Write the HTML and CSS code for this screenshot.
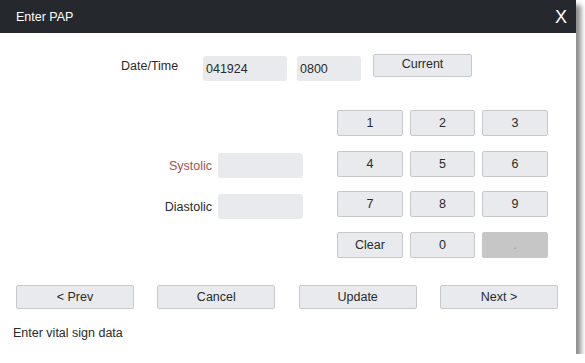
FILE: index.html
```html
<!DOCTYPE html>
<html>
<head>
<meta charset="utf-8">
<link rel="stylesheet" href="styles.css">
</head>
<body>
<div class="window">
  <div class="titlebar">
    <span class="title">Enter PAP</span>
    <span class="close">X</span>
  </div>
  <div class="content">
    <div class="date-row">
      <span class="date-label">Date/Time</span>
      <div class="field date-field">041924</div>
      <div class="field time-field">0800</div>
      <button class="btn current-btn">Current</button>
    </div>
    <div class="main">
      <div class="vitals">
        <div class="vital-row">
          <span class="vital-label systolic">Systolic</span>
          <div class="field vital-field"></div>
        </div>
        <div class="vital-row">
          <span class="vital-label">Diastolic</span>
          <div class="field vital-field"></div>
        </div>
      </div>
      <div class="keypad">
        <button class="btn key">1</button>
        <button class="btn key">2</button>
        <button class="btn key">3</button>
        <button class="btn key">4</button>
        <button class="btn key">5</button>
        <button class="btn key">6</button>
        <button class="btn key">7</button>
        <button class="btn key">8</button>
        <button class="btn key">9</button>
        <button class="btn key">Clear</button>
        <button class="btn key">0</button>
        <button class="btn key disabled">.</button>
      </div>
    </div>
    <div class="nav-row">
      <button class="btn nav-btn">&lt; Prev</button>
      <button class="btn nav-btn">Cancel</button>
      <button class="btn nav-btn">Update</button>
      <button class="btn nav-btn">Next &gt;</button>
    </div>
    <div class="status">Enter vital sign data</div>
  </div>
</div>
</body>
</html>
```
FILE: styles.css
```css
html, body {
  margin: 0;
  padding: 0;
  background: #ffffff;
}
body {
  font-family: "Liberation Sans", Arial, sans-serif;
  font-size: 12.5px;
  color: #2a2a2a;
}
.window {
  width: 576px;
  height: 354px;
  background: #ffffff;
  box-shadow: 5px 5px 5px rgba(0, 0, 0, 0.45);
  display: flex;
  flex-direction: column;
}
.titlebar {
  height: 33px;
  background: #25292e;
  color: #ffffff;
  display: flex;
  align-items: center;
  justify-content: space-between;
  padding: 0 9px 0 16px;
  flex: none;
}
.title {
  font-size: 12.5px;
}
.close {
  font-size: 18px;
  line-height: 1;
}
.content {
  display: flex;
  flex-direction: column;
}
.date-row {
  display: flex;
  align-items: flex-start;
  padding-left: 121px;
  margin-top: 21px;
  height: 27px;
}
.date-label {
  width: 82px;
  margin-top: 5px;
}
.field {
  background: #e8eaed;
  border-radius: 3px;
  height: 25px;
  box-sizing: border-box;
  display: flex;
  align-items: center;
  padding: 0 3px;
  margin-top: 2px;
  font-size: 12.5px;
}
.date-field {
  width: 84px;
}
.time-field {
  width: 64px;
  margin-left: 10px;
}
.btn {
  font-family: "Liberation Sans", Arial, sans-serif;
  font-size: 12.5px;
  color: #2a2a2a;
  background: #e8eaed;
  border: 1px solid #c6c8cb;
  border-radius: 2px;
  padding: 0;
  margin: 0;
  box-sizing: border-box;
}
.current-btn {
  width: 99px;
  height: 23px;
  margin-left: 12px;
  padding-bottom: 3px;
}
.main {
  display: flex;
  margin-top: 29px;
}
.vitals {
  display: flex;
  flex-direction: column;
  gap: 16px;
  width: 303px;
  padding-top: 43px;
}
.vital-row {
  display: flex;
  justify-content: flex-end;
  align-items: center;
  gap: 6px;
}
.vital-row .field {
  margin-top: 0;
}
.vital-label.systolic {
  color: #a5524f;
}
.vital-field {
  width: 85px;
}
.keypad {
  margin-left: 34px;
  display: grid;
  grid-template-columns: 66px 65px 66px;
  grid-auto-rows: 26px;
  column-gap: 7px;
  row-gap: 14.5px;
}
.key.disabled {
  background: #c6c6c6;
  border-color: #c6c6c6;
  color: #9a9a9a;
}
.nav-row {
  display: flex;
  justify-content: space-between;
  padding: 0 18px 0 16px;
  margin-top: 27px;
}
.nav-btn {
  width: 118px;
  height: 24px;
}
.status {
  margin-top: 17px;
  padding-left: 13px;
}
```
